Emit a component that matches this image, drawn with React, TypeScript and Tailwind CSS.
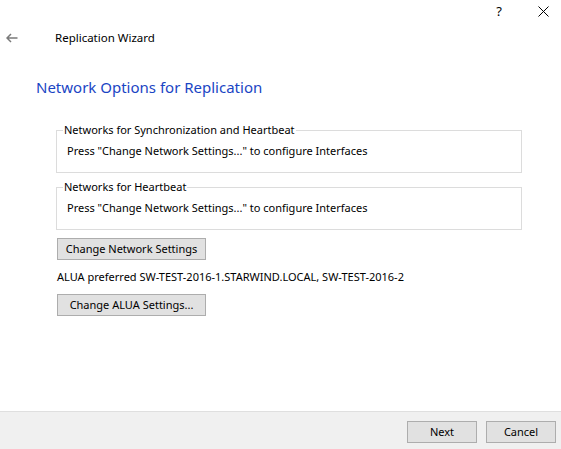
import React from "react";

const font = { fontFamily: '"Noto Sans", "Liberation Sans", sans-serif' };

function GroupBox({ title, text }: { title: string; text: string }) {
  return (
    <fieldset className="border border-[#dcdcdc] mx-0 h-[51px] p-0">
      <legend className="ml-[6px] px-px text-[11px] leading-[16px]">{title}</legend>
      <div className="text-[11px] leading-[16px] mt-[5px] ml-[10px]">{text}</div>
    </fieldset>
  );
}

function Btn({ label, w }: { label: string; w: string }) {
  return (
    <button
      className={`h-[22px] ${w} bg-[#e1e1e1] border border-[#adadad] text-[11px] leading-[16px] text-black`}
    >
      {label}
    </button>
  );
}

export default function App() {
  return (
    <div className="w-[561px] h-[449px] bg-white flex flex-col text-black" style={font}>
      {/* window caption */}
      <div className="h-[22px] flex items-center justify-end">
        <span className="w-[20px] text-center text-[13px] leading-[22px] mr-[16px]">?</span>
        <span className="w-[36px] flex justify-center">
          <svg width="11" height="11" viewBox="0 0 11 11" fill="none" stroke="#000" strokeWidth="1">
            <path d="M0.5 0.5 L10.5 10.5 M10.5 0.5 L0.5 10.5" />
          </svg>
        </span>
      </div>

      {/* wizard header */}
      <div className="h-[32px] flex items-center">
        <span className="w-[55px] pl-[6px] flex items-center">
          <svg width="12" height="10" viewBox="0 0 12 10" fill="none" stroke="#7a7a7a" strokeWidth="1.5">
            <path d="M11.5 5 H1.2 M5 1 L1 5 L5 9" />
          </svg>
        </span>
        <span className="text-[11.5px] leading-[16px]">Replication Wizard</span>
      </div>

      {/* page heading */}
      <div className="pl-[36px] pt-[22px] h-[68px]">
        <h1 className="text-[15px] leading-[22px] text-[#1a45c4]">Network Options for Replication</h1>
      </div>

      {/* body */}
      <div className="flex-1 pl-[56px] pr-[39px] flex flex-col">
        <GroupBox
          title="Networks for Synchronization and Heartbeat"
          text={'Press "Change Network Settings..." to configure Interfaces'}
        />
        <div className="h-[6px]" />
        <GroupBox title="Networks for Heartbeat" text={'Press "Change Network Settings..." to configure Interfaces'} />
        <div className="mt-[5px] pl-px">
          <Btn label="Change Network Settings" w="w-[149px]" />
        </div>
        <div className="mt-[9px] pl-px text-[11px] leading-[16px]">
          ALUA preferred SW-TEST-2016-1.STARWIND.LOCAL, SW-TEST-2016-2
        </div>
        <div className="mt-[6px] pl-px">
          <Btn label="Change ALUA Settings..." w="w-[149px]" />
        </div>
      </div>

      {/* footer */}
      <div className="h-[38px] bg-[#f0f0f0] border-t border-[#dfdfdf] flex items-center justify-end gap-[9px] pr-[5px] pt-[2px]">
        <Btn label="Next" w="w-[70px]" />
        <Btn label="Cancel" w="w-[70px]" />
      </div>
    </div>
  );
}
